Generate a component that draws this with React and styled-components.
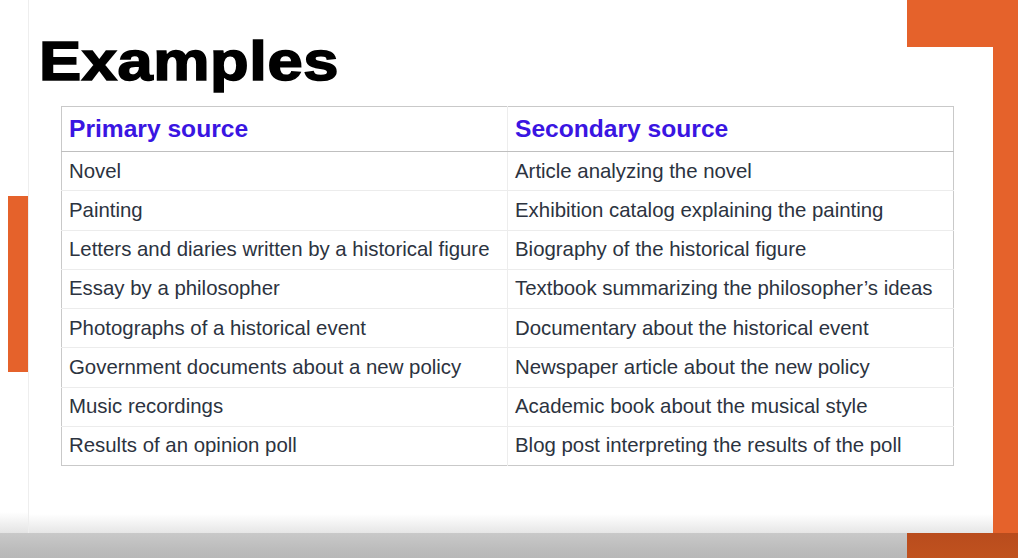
import React from "react";
import styled, { createGlobalStyle } from "styled-components";

const GlobalStyle = createGlobalStyle`
  html, body {
    margin: 0;
    padding: 0;
    background: #fff;
  }
  body {
    font-family: "Liberation Sans", Arial, sans-serif;
  }
`;

const Screen = styled.div`
  width: 1018px;
  height: 558px;
  overflow: hidden;
  display: grid;
  grid-template-columns: 28px 879px 86px 25px;
  grid-template-rows: 47px 486px 25px;
  background: #fff;
`;

const CornerBlock = styled.div`
  grid-column: 3 / 5;
  grid-row: 1;
  background: #e5622b;
  position: relative;
  z-index: 1;
`;

const SideBar = styled.div`
  grid-column: 4;
  grid-row: 2;
  background: #e5622b;
`;

const Gutter = styled.div`
  grid-column: 1;
  grid-row: 1 / 3;
  display: flex;
  align-items: flex-start;
  padding-top: 196px;
  padding-left: 8px;
  background: linear-gradient(to bottom, #fff 0, #fff 512px, #e4e4e4 533px);
`;

const LeftTab = styled.div`
  width: 20px;
  height: 176px;
  background: #e5622b;
`;

const Slide = styled.main`
  grid-column: 2 / 4;
  grid-row: 1 / 3;
  display: flex;
  flex-direction: column;
  padding-left: 32px;
  border-left: 1px solid #eeeeee;
  background: linear-gradient(to bottom, #fff 0, #fff 514px, #e6e6e6 533px);
`;

const Title = styled.h1`
  margin: 33px 0 17px -22px;
  font-size: 56px;
  line-height: 56px;
  font-weight: 700;
  color: #000;
  letter-spacing: 0.5px;
  transform: scaleX(1.13);
  transform-origin: left center;
  -webkit-text-stroke: 1.6px #000;
`;

const Table = styled.table`
  width: 893px;
  border-collapse: collapse;
  table-layout: fixed;
  border: 1px solid #c9c9c9;
`;

const HeadCell = styled.th`
  height: 44px;
  padding: 0 7px;
  text-align: left;
  font-size: 24.6px;
  font-weight: 700;
  color: #3a15e2;
  border-bottom: 1.5px solid #bfbfbf;
  border-left: ${p => (p.$first ? "none" : "1px solid #ededed")};
  vertical-align: middle;
`;

const Cell = styled.td`
  height: 39.25px;
  padding: 0 7px;
  font-size: 20.4px;
  color: #2c3340;
  border-top: 1px solid #ececec;
  border-left: ${p => (p.$first ? "none" : "1px solid #ededed")};
  vertical-align: middle;
  white-space: nowrap;
  box-sizing: border-box;
`;

const BottomShade = styled.div`
  grid-column: 1 / 3;
  grid-row: 3;
  background: linear-gradient(to bottom, #c9c9c9 0, #bdbdbd 60%, #b8b8b8 100%);
`;

const BottomOrange = styled.div`
  grid-column: 3 / 5;
  grid-row: 3;
  background: linear-gradient(to bottom, #b94c1d 0, #c0521f 100%);
`;

const rows = [
  ["Novel", "Article analyzing the novel"],
  ["Painting", "Exhibition catalog explaining the painting"],
  ["Letters and diaries written by a historical figure", "Biography of the historical figure"],
  ["Essay by a philosopher", "Textbook summarizing the philosopher\u2019s ideas"],
  ["Photographs of a historical event", "Documentary about the historical event"],
  ["Government documents about a new policy", "Newspaper article about the new policy"],
  ["Music recordings", "Academic book about the musical style"],
  ["Results of an opinion poll", "Blog post interpreting the results of the poll"],
];

export default function App() {
  return (
    <>
      <GlobalStyle />
      <Screen>
        <Gutter>
          <LeftTab />
        </Gutter>
        <Slide>
          <Title>Examples</Title>
          <Table>
            <thead>
              <tr>
                <HeadCell $first>Primary source</HeadCell>
                <HeadCell>Secondary source</HeadCell>
              </tr>
            </thead>
            <tbody>
              {rows.map(([a, b]) => (
                <tr key={a}>
                  <Cell $first>{a}</Cell>
                  <Cell>{b}</Cell>
                </tr>
              ))}
            </tbody>
          </Table>
        </Slide>
        <CornerBlock />
        <SideBar />
        <BottomShade />
        <BottomOrange />
      </Screen>
    </>
  );
}
